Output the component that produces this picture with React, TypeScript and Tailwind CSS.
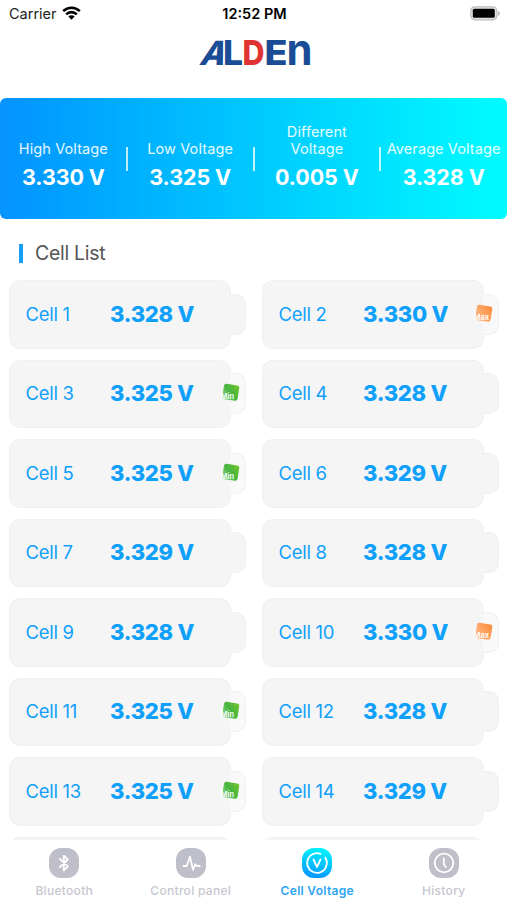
import React from 'react';

type Cell = { id: number; voltage: string; tag?: 'Max' | 'Min' };

const stats = [
  { label: 'High Voltage', value: '3.330 V' },
  { label: 'Low Voltage', value: '3.325 V' },
  { label: 'Different Voltage', value: '0.005 V' },
  { label: 'Average Voltage', value: '3.328 V' },
];

const cells: Cell[] = [
  { id: 1, voltage: '3.328 V' },
  { id: 2, voltage: '3.330 V', tag: 'Max' },
  { id: 3, voltage: '3.325 V', tag: 'Min' },
  { id: 4, voltage: '3.328 V' },
  { id: 5, voltage: '3.325 V', tag: 'Min' },
  { id: 6, voltage: '3.329 V' },
  { id: 7, voltage: '3.329 V' },
  { id: 8, voltage: '3.328 V' },
  { id: 9, voltage: '3.328 V' },
  { id: 10, voltage: '3.330 V', tag: 'Max' },
  { id: 11, voltage: '3.325 V', tag: 'Min' },
  { id: 12, voltage: '3.328 V' },
  { id: 13, voltage: '3.325 V', tag: 'Min' },
  { id: 14, voltage: '3.329 V' },
];

const StatusBar = () => (
  <div className="h-7 grid grid-cols-3 items-center pl-[9px] pr-[7px] text-[14.5px] text-[#222]">
    <div className="flex items-center gap-[5px]">
      <span>Carrier</span>
      <svg className="-mt-[3px]" width="19" height="14" viewBox="0 0 19 14" fill="none" stroke="#000" strokeWidth="2.6">
        <path d="M1.2 5.2a11.8 11.8 0 0 1 16.6 0" />
        <path d="M4.2 8.3a7.5 7.5 0 0 1 10.6 0" />
        <path d="M9.5 13.8 6.4 10.6a4.4 4.4 0 0 1 6.2 0z" fill="#000" stroke="none" />
      </svg>
    </div>
    <span className="text-center font-semibold text-black whitespace-nowrap">12:52 PM</span>
    <svg className="justify-self-end -mt-[2px]" width="30" height="15" viewBox="0 0 30 15">
      <rect x="0.8" y="0.8" width="26" height="13" rx="4" fill="#e4e4e4" stroke="#bcbcbc" strokeWidth="1.2" />
      <rect x="2.8" y="2.8" width="22" height="9" rx="1.5" fill="#000" />
      <path d="M28 5v5c1.2-.4 1.8-1.3 1.8-2.5s-.6-2.1-1.8-2.5z" fill="#b5b5b5" />
    </svg>
  </div>
);

const Logo = () => (
  <div className="h-[70px] flex justify-center">
    <svg className="-mt-2.5" width="120" height="70" viewBox="0 -10 120 70" fontFamily="Inter, sans-serif" fontWeight="800" fontSize="33.5">
      <text transform="translate(4.5 36.5) skewX(-19)" textLength="25" lengthAdjust="spacingAndGlyphs" fill="#1b4c96">A</text>
      <text x="29" y="36.5" textLength="20" lengthAdjust="spacingAndGlyphs" fill="#1b4c96">L</text>
      <text x="48.5" y="36.5" textLength="22" lengthAdjust="spacingAndGlyphs" fill="#e03434">D</text>
      <text x="70.5" y="36.5" textLength="23" lengthAdjust="spacingAndGlyphs" fill="#1b4c96">E</text>
      <text x="92.500" y="36.5" textLength="26" lengthAdjust="spacingAndGlyphs" fill="#1b4c96" fontSize="43" fontWeight="700">n</text>
    </svg>
  </div>
);

const Tag = ({ kind }: { kind: 'Max' | 'Min' }) => (
  <svg width="26" height="24" viewBox="-3 0 26 24">
    <defs>
      <linearGradient id="tagMin" x1="0" y1="1" x2="1" y2="0">
        <stop offset="0" stopColor="#8edc8c" />
        <stop offset="0.5" stopColor="#46b440" />
        <stop offset="1" stopColor="#76c52c" />
      </linearGradient>
      <linearGradient id="tagMax" x1="0" y1="1" x2="1" y2="0">
        <stop offset="0" stopColor="#ffbe8e" />
        <stop offset="1" stopColor="#f98a38" />
      </linearGradient>
    </defs>
    <rect x="4" y="2.5" width="15.5" height="15.5" rx="2.5" transform="rotate(9 11.5 10.5)" fill={kind === 'Min' ? 'url(#tagMin)' : 'url(#tagMax)'} />
    <text x="1.5" y="16.5" fill="#fff" fontSize="7.5" fontWeight="600" fontFamily="Inter, sans-serif">{kind}</text>
  </svg>
);

const CellCard = ({ cell }: { cell: Cell }) => (
  <div className="h-[68.5px] flex items-center">
    <div className="w-[222px] h-full flex items-center rounded-[11px] border border-[#f0f0f0] bg-[#f5f5f5] pl-[15.5px] text-[#0fa0fb]">
      <span className="mt-px w-[84.5px] text-[18.5px] tracking-[-0.3px] whitespace-nowrap">{cell.id ? `Cell ${cell.id}` : ''}</span>
      <span className="text-[22px] tracking-[-0.3px] font-extrabold whitespace-nowrap">{cell.voltage}</span>
    </div>
    <div className={`relative -ml-px w-[15.5px] h-[41px] rounded-r-[10px] border border-l-0 border-[#f0f0f0] ${cell.tag ? 'bg-[#f9f9f9]' : 'bg-[#f5f5f5]'}`}>
      {cell.tag && (
        <div className="absolute -left-[14px] top-[8px]">
          <Tag kind={cell.tag} />
        </div>
      )}
    </div>
  </div>
);

const BluetoothIcon = () => (
  <path d="m10.8 10.8 8 7.7-4 3.9V7.6l4 3.9-8 7.7" />
);

const PulseIcon = () => (
  <path d="M7.5 18h3.2L14 8.8l3 13 2.3-5.6 1.5 1.8h3" />
);

const VoltageIcon = () => (
  <>
    <path d="M18.5 5.9A9.8 9.8 0 1 0 23.3 9.8" />
    <path d="m11.5 11.5 3.5 7.5 3.5-7.5" />
  </>
);

const HistoryIcon = () => (
  <>
    <circle cx="15" cy="15" r="9.3" />
    <path d="M14.8 10.5v6l2 2.5" />
  </>
);

const tabs = [
  { name: 'Bluetooth', icon: <BluetoothIcon /> },
  { name: 'Control panel', icon: <PulseIcon /> },
  { name: 'Cell Voltage', icon: <VoltageIcon />, active: true },
  { name: 'History', icon: <HistoryIcon /> },
];

const TabBar = () => (
  <nav className="h-[60px] shrink-0 grid grid-cols-4 bg-white pl-px">
    {tabs.map((tab) => (
      <button key={tab.name} className="flex flex-col items-center pt-[8px]">
        <svg width="30" height="30" viewBox="0 0 30 30" fill="none" stroke="#fff" strokeWidth="1.8" strokeLinecap="round" strokeLinejoin="round">
          <defs>
            <linearGradient id="activeTab" x1="0.6" y1="0" x2="0.4" y2="1">
              <stop offset="0" stopColor="#00f5ff" />
              <stop offset="1" stopColor="#0796ff" />
            </linearGradient>
          </defs>
          <rect width="30" height="30" rx="12" stroke="none" fill={tab.active ? 'url(#activeTab)' : '#bfbfca'} />
          {tab.icon}
        </svg>
        <span className={`mt-[5px] text-[12px] leading-4 tracking-[0.3px] whitespace-nowrap ${tab.active ? 'font-semibold text-[#2ca3f4]' : 'font-medium text-[#c7c7cf]'}`}>
          {tab.name}
        </span>
      </button>
    ))}
  </nav>
);

const App = () => {
  return (
    <div className="w-[507px] h-[900px] flex flex-col overflow-hidden bg-white font-['Inter',sans-serif]">
      <StatusBar />
      <Logo />

      {/* Résumé des tensions */}
      <div className="h-[121px] shrink-0 grid grid-cols-4 rounded-md bg-linear-to-r from-[#0893ff] to-[#00fcff] text-white">
        {stats.map((stat, i) => (
          <div key={stat.label} className="flex items-center">
            <div className="flex-1 h-full flex flex-col items-center justify-end pb-[29px]">
              <span className={`text-[14.5px] leading-[17px] text-center text-white/90 tracking-[0.1px] ${i === 2 ? 'w-[80px]' : 'whitespace-nowrap'}`}>{stat.label}</span>
              <span className="mt-[7px] text-[21.5px] leading-[26px] tracking-[-0.1px] font-bold whitespace-nowrap">{stat.value}</span>
            </div>
            {i < 3 && <div className="-ml-px -mr-px w-[2px] h-6 bg-white/75" />}
          </div>
        ))}
      </div>

      <div className="h-[61px] shrink-0 flex items-center pt-[8px] pl-[19px] gap-[12px]">
        <div className="w-1 h-[19px] bg-[#159ff8]" />
        <h2 className="mt-px text-[19.5px] text-[#555] tracking-[-0.3px]">Cell List</h2>
      </div>

      {/* Liste des cellules */}
      <div className="flex-1 min-h-0 overflow-hidden grid grid-cols-2 content-start gap-x-[16px] gap-y-[11px] pl-[9px] pr-[8px]">
        {cells.map((cell) => (
          <CellCard key={cell.id} cell={cell} />
        ))}
        <CellCard cell={{ id: 0, voltage: '' }} />
        <CellCard cell={{ id: 0, voltage: '' }} />
      </div>

      <TabBar />
    </div>
  );
};

export default App;
